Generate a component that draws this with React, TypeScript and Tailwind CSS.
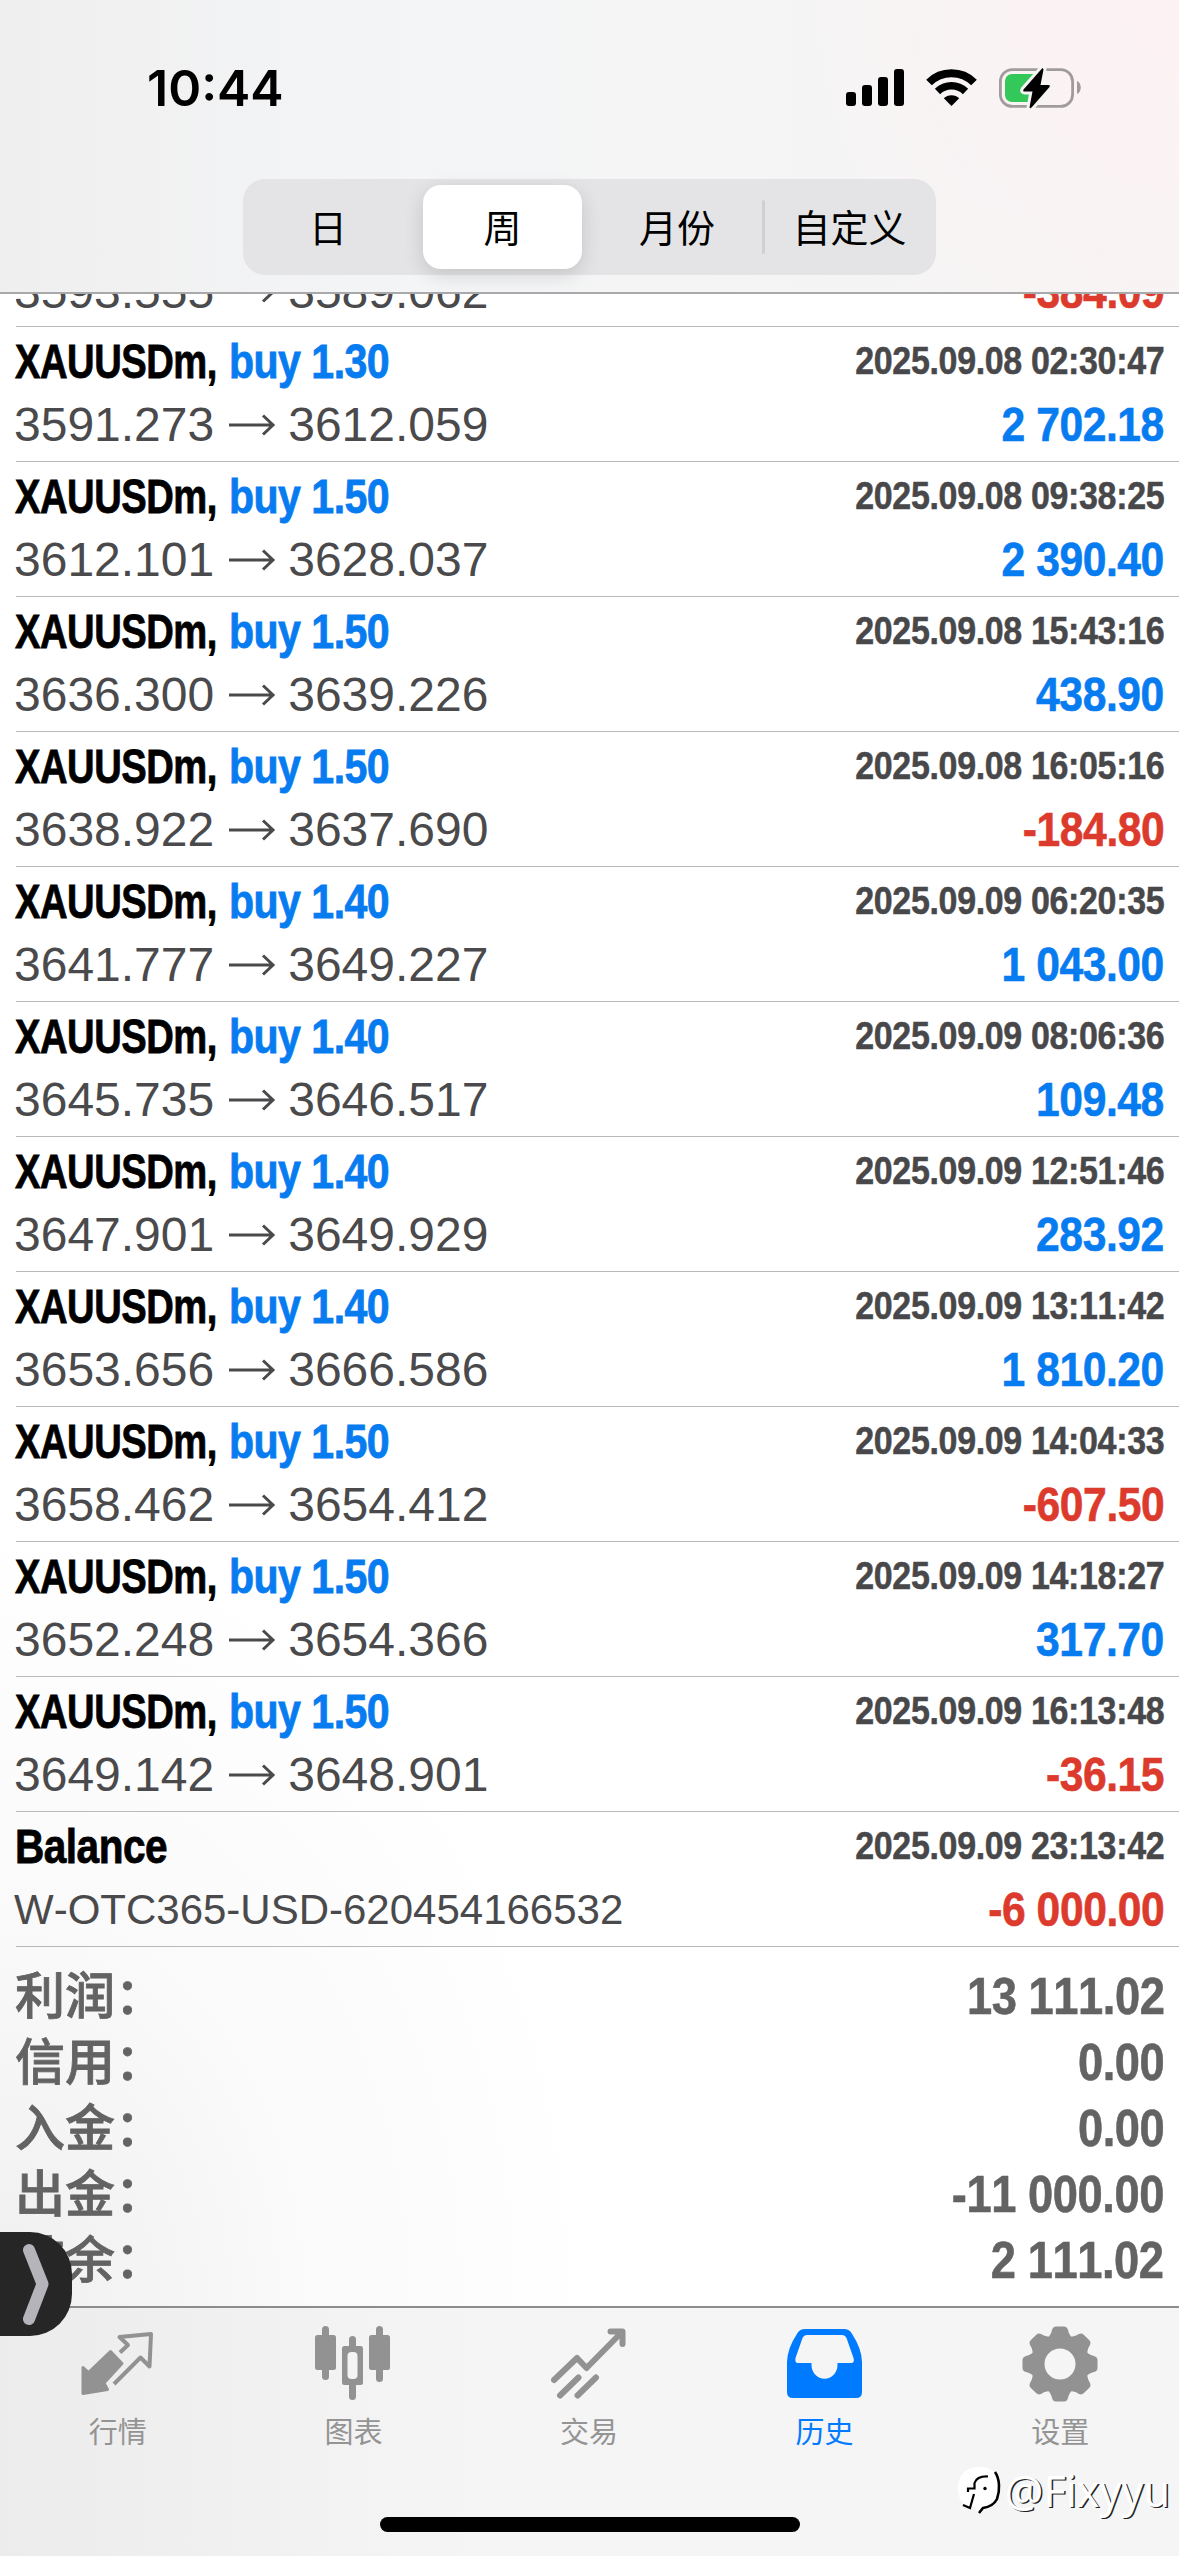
import React from 'react';

interface Deal {
  volume: string;
  open: string;
  close: string;
  time: string;
  profit: string;
}

const deals: Deal[] = [
  { volume: '1.30', open: '3591.273', close: '3612.059', time: '2025.09.08 02:30:47', profit: '2 702.18' },
  { volume: '1.50', open: '3612.101', close: '3628.037', time: '2025.09.08 09:38:25', profit: '2 390.40' },
  { volume: '1.50', open: '3636.300', close: '3639.226', time: '2025.09.08 15:43:16', profit: '438.90' },
  { volume: '1.50', open: '3638.922', close: '3637.690', time: '2025.09.08 16:05:16', profit: '-184.80' },
  { volume: '1.40', open: '3641.777', close: '3649.227', time: '2025.09.09 06:20:35', profit: '1 043.00' },
  { volume: '1.40', open: '3645.735', close: '3646.517', time: '2025.09.09 08:06:36', profit: '109.48' },
  { volume: '1.40', open: '3647.901', close: '3649.929', time: '2025.09.09 12:51:46', profit: '283.92' },
  { volume: '1.40', open: '3653.656', close: '3666.586', time: '2025.09.09 13:11:42', profit: '1 810.20' },
  { volume: '1.50', open: '3658.462', close: '3654.412', time: '2025.09.09 14:04:33', profit: '-607.50' },
  { volume: '1.50', open: '3652.248', close: '3654.366', time: '2025.09.09 14:18:27', profit: '317.70' },
  { volume: '1.50', open: '3649.142', close: '3648.901', time: '2025.09.09 16:13:48', profit: '-36.15' },
];

const summary = [
  { label: '利润：', value: '13 111.02' },
  { label: '信用：', value: '0.00' },
  { label: '入金：', value: '0.00' },
  { label: '出金：', value: '-11 000.00' },
  { label: '结余：', value: '2 111.02' },
];

const StatusBar: React.FC = () => (
  <div className="flex h-[179px] justify-between pt-[58px] pl-[147px] pr-[97px]">
    <span className="h-[60px] font-['Inter'] text-[50px] leading-[60px] font-semibold text-black">10:44</span>
    <div className="flex h-[60px] items-center">
      <svg className="h-[38px] w-[58px]" viewBox="0 0 58 38">
        <rect x="0" y="23" width="10" height="14" rx="3" />
        <rect x="16" y="16" width="10" height="21" rx="3" />
        <rect x="32" y="8" width="10" height="29" rx="3" />
        <rect x="48" y="0" width="10" height="37" rx="3" />
      </svg>
      <svg className="ml-[22px] h-[38px] w-[51px]" viewBox="0 0 51 38" fill="none" stroke="#000">
        <path d="M3 13.5a32 32 0 0 1 45 0" strokeWidth="8" />
        <path d="M11.5 22.5a20 20 0 0 1 28 0" strokeWidth="7.5" />
        <path d="M25.5 37 17.8 29.3a11 11 0 0 1 15.4 0Z" fill="#000" stroke="none" />
      </svg>
      <svg className="ml-[22px] h-[42px] w-[83px]" viewBox="0 0 83 42">
        <rect x="1.4" y="2.6" width="72.2" height="36.8" rx="12" fill="none" stroke="#a09c9d" strokeWidth="2.8" />
        <path d="M78 14c5 2 5 11 0 13Z" fill="#a09c9d" />
        <path d="M13 7h22v28H13a7 7 0 0 1-7-7V14a7 7 0 0 1 7-7Z" fill="#34c759" />
        <path
          d="M43 1.500 24.500 22.500Q23.500 24.500 25.500 24.500H33.500L30.500 40.500Q31.500 42 33 40L50.500 20Q51.500 18 49.500 18H41.500L44.500 2.500Q44 .5 43 1.500Z"
          fill="#000"
          stroke="#f7f4f4"
          strokeWidth="6"
          strokeLinejoin="round"
          paintOrder="stroke"
        />
      </svg>
    </div>
  </div>
);

const PeriodSwitch: React.FC = () => (
  <div className="mx-auto flex h-[96px] w-[693px] items-center rounded-[22px] bg-[#e4e4e6] font-['Noto_Sans_CJK_SC',sans-serif] text-[38px] leading-[56px] text-black">
    <span className="w-[170px] pb-[2px] text-center">日</span>
    <span className="mx-[10px] flex h-[84px] w-[159px] items-center justify-center rounded-[18px] bg-white pb-[2px] shadow-[0_6px_20px_rgba(0,0,0,0.14)]">周</span>
    <span className="w-[170px] pb-[2px] text-center">月份</span>
    <span className="h-[54px] w-[3px] rounded-full bg-[#d0d0d3]" />
    <span className="w-[169px] pb-[2px] text-center">自定义</span>
  </div>
);

const Arrow: React.FC = () => (
  <svg className="mr-[12px] ml-[15px] h-[22px] w-[47px]" viewBox="0 0 47 22" fill="none" stroke="#4a4a4c" strokeWidth="3">
    <path d="M0 11h44M34 1.500 44 11l-10 9.500" />
  </svg>
);

const Profit: React.FC<{ value: string }> = ({ value }) => (
  <span
    className={`origin-right scale-x-[0.888] text-[48px] font-bold tracking-[-0.500px] whitespace-nowrap [-webkit-text-stroke:0.6px] ${
      value.startsWith('-') ? 'text-[#dc3a2c]' : 'text-[#077bf0]'
    }`}
  >
    {value}
  </span>
);

const Time: React.FC<{ value: string }> = ({ value }) => (
  <span className="origin-right scale-x-[0.895] text-[38px] font-bold tracking-[-0.400px] whitespace-nowrap text-[#48484a] [-webkit-text-stroke:0.5px]">
    {value}
  </span>
);

const Row: React.FC<{ title: React.ReactNode; detail: React.ReactNode; time: string; profit: string }> = ({
  title,
  detail,
  time,
  profit,
}) => (
  <div className="ml-4 h-[135px] border-b border-[#b9b9bb] pr-[15px]">
    <div className="flex h-[69px] items-center justify-between">
      <div className="-ml-px h-full flex-1 pt-[3px] text-[48px] leading-[63px] font-bold tracking-[-0.600px] whitespace-nowrap [-webkit-text-stroke:0.8px]">
        {title}
      </div>
      <Time value={time} />
    </div>
    <div className="flex h-[57px] items-center justify-between">
      <div className="-ml-[2px] flex items-center text-[48px] text-[#4a4a4c]">{detail}</div>
      <Profit value={profit} />
    </div>
  </div>
);

const tabs = [
  {
    label: '行情',
    icon: (
      <svg className="h-[76px] w-[76px]" viewBox="80 2326 76 76" fill="none" stroke="#929292" strokeWidth="4" strokeLinejoin="round">
        <path d="M110.500 2351.500 122 2363.500 104 2383 107.500 2389.500 83 2393.500 83 2367.500 88.500 2372.500Z" fill="#929292" strokeWidth="3" />
        <path d="M120 2352.500 128 2345 119.500 2337 151 2334 149.500 2366.500 140.500 2357.500 114 2384" />
      </svg>
    ),
  },
  {
    label: '图表',
    icon: (
      <svg className="h-[76px] w-[76px]" viewBox="315 2326 76 76" fill="#929292">
        <rect x="315" y="2335" width="21" height="35" rx="2.500" />
        <rect x="322" y="2326" width="7" height="54" rx="3.500" />
        <rect x="369" y="2335" width="21" height="35" rx="2.500" />
        <rect x="376" y="2326" width="7" height="56" rx="3.500" />
        <rect x="349" y="2336" width="7" height="64" rx="3.500" />
        <rect x="342" y="2346" width="21" height="39" rx="2.500" />
        <rect x="347.500" y="2352" width="10" height="27" rx="4" fill="#f4f4f4" />
      </svg>
    ),
  },
  {
    label: '交易',
    icon: (
      <svg className="h-[76px] w-[76px]" viewBox="551 2326 76 76" fill="none" stroke="#929292" strokeWidth="6" strokeLinecap="round" strokeLinejoin="round">
        <path d="M554 2380 577 2358 586.500 2368 622 2332M610.500 2331.500H622.500V2344M560 2395.500 578.500 2377.500M577.500 2395.500 596 2377.500" />
      </svg>
    ),
  },
  {
    label: '历史',
    active: true,
    icon: (
      <svg className="h-[76px] w-[76px]" viewBox="786 2326 76 76">
        <path
          fillRule="evenodd"
          fill="#007aff"
          d="M804 2329H843Q848 2329 850.500 2333 861 2349 861 2362V2392Q861 2398 855 2398H792Q786 2398 786 2392V2362Q786 2349 796.500 2333 799 2329 804 2329ZM806 2335Q803 2335 801.500 2338L794.500 2358Q793.500 2363 797 2363H810.500V2365A13 13.700 0 0 0 836.500 2365V2363H850Q854 2363 852.500 2358L845.500 2338Q844 2335 841 2335Z"
        />
      </svg>
    ),
  },
  {
    label: '设置',
    icon: (
      <svg className="h-[76px] w-[76px]" viewBox="-38 -38 76 76" fill="#929292">
        {[0, 45, 90, 135, 180, 225, 270, 315].map((angle) => (
          <path key={angle} transform={`rotate(${angle})`} d="M-14-24Q-9-29-8-34-7-37.500-4-37.500H4Q7-37.500 8-34 9-29 14-24Z" />
        ))}
        <circle r="22.500" fill="none" stroke="#929292" strokeWidth="14" />
      </svg>
    ),
  },
];

const TabBar: React.FC = () => (
  <div className="h-[250px] border-t-2 border-[#8c8c8e] bg-linear-to-r from-[#ececec] via-[#f5f5f5] via-40% to-[#f5f5f5]">
    <div className="grid grid-cols-5 pt-[18px] pr-px">
      {tabs.map((tab) => (
        <div key={tab.label} className="flex flex-col items-center">
          {tab.icon}
          <span
            className={`mt-[6px] font-['Noto_Sans_CJK_SC',sans-serif] text-[29px] leading-[44px] ${
              tab.active ? 'text-[#007aff]' : 'text-[#949494]'
            }`}
          >
            {tab.label}
          </span>
        </div>
      ))}
    </div>
    <div className="mx-auto mt-[65px] h-[15px] w-[420px] rounded-full bg-black" />
  </div>
);

const App: React.FC = () => {
  return (
    <div className="relative flex h-[2556px] w-[1179px] flex-col overflow-hidden bg-white font-['Liberation_Sans',Arial,sans-serif] [font-kerning:none]">
      <header className="h-[294px] shrink-0 border-b-2 border-[#a9a9ab] bg-[radial-gradient(ellipse_380px_400px_at_top_right,#fdf2f3,#fdf2f300),linear-gradient(to_right,#efefef,#f4f5f7_35%,#f5f5f5_60%,#f7f4f4)]">
        <StatusBar />
        <PeriodSwitch />
      </header>

      <main className="flex-1 overflow-hidden bg-[radial-gradient(ellipse_600px_800px_at_bottom_left,#efefef,#fafafa_50%,#fff)]">
        {/* previous deal, scrolled under the header */}
        <div className="ml-4 flex h-[33px] items-end justify-between overflow-hidden border-b border-[#b9b9bb] pr-[15px] pb-[17px] leading-[34px]">
          <div className="-ml-[2px] flex items-center text-[48px] text-[#4a4a4c]">
            3593.555
            <Arrow />
            3589.062
          </div>
          <Profit value="-384.09" />
        </div>

        {deals.map((deal) => (
          <Row
            key={deal.time}
            title={
              <>
                <span className="inline-block w-[214px] origin-left scale-x-[0.795] text-black">XAUUSDm,</span>
                <span className="inline-block origin-left scale-x-[0.855] text-[#077bf0]">buy {deal.volume}</span>
              </>
            }
            detail={
              <>
                {deal.open}
                <Arrow />
                {deal.close}
              </>
            }
            time={deal.time}
            profit={deal.profit}
          />
        ))}
        <Row
          title={<span className="inline-block origin-left scale-x-[0.845] text-black">Balance</span>}
          detail={<span className="text-[42px]">W-OTC365-USD-620454166532</span>}
          time="2025.09.09 23:13:42"
          profit="-6 000.00"
        />

        <div className="pt-[17px] pr-[15px] pl-[15px] text-[#636364]">
          {summary.map((item) => (
            <div key={item.label} className="flex h-[66px] items-center justify-between">
              <span className="mb-[10px] font-['Noto_Sans_CJK_SC',sans-serif] text-[50px] leading-[56px] font-medium [-webkit-text-stroke:0.8px]">
                {item.label}
              </span>
              <span className="origin-right scale-x-[0.888] text-[51px] font-bold tracking-[-0.500px] [-webkit-text-stroke:0.6px]">{item.value}</span>
            </div>
          ))}
        </div>
      </main>

      <TabBar />

      <div className="absolute top-[2232px] left-0 flex h-[104px] w-[72px] rounded-r-[42px] bg-[#262627]">
        <svg className="h-[104px] w-[72px]" viewBox="0 0 72 104" fill="none" stroke="#b5b4ba" strokeWidth="12" strokeLinecap="round" strokeLinejoin="round">
          <path d="M29 18 42.500 52 29 87" />
        </svg>
      </div>

      <div className="absolute right-[9px] bottom-[40px] flex items-center gap-[3px]">
        <svg className="h-[48px] w-[44px]" viewBox="0 0 44 48">
          <path d="M21 0C35 0 41 7 41 21S36 39 24 41l-4 5-4-6C5 39 0 33 0 21S7 0 21 0Z" fill="#fff" />
          <path d="M37 5C42 12 42 24 39 32 36 38 31 40 25 41L21 46" fill="none" stroke="#000" strokeWidth="2.600" />
          <path d="M5 38 12 41 16 27M10 25V21.500H16.500V16Q19 9 30 9.500" fill="none" stroke="#000" strokeWidth="2.200" />
          <circle cx="27" cy="21.500" r="1.700" />
        </svg>
        <span className="font-['Noto_Sans'] text-[43px] leading-[50px] text-white [text-shadow:1.5px_1px_0_#222]">@Fixyyu</span>
      </div>
    </div>
  );
};

export default App;
